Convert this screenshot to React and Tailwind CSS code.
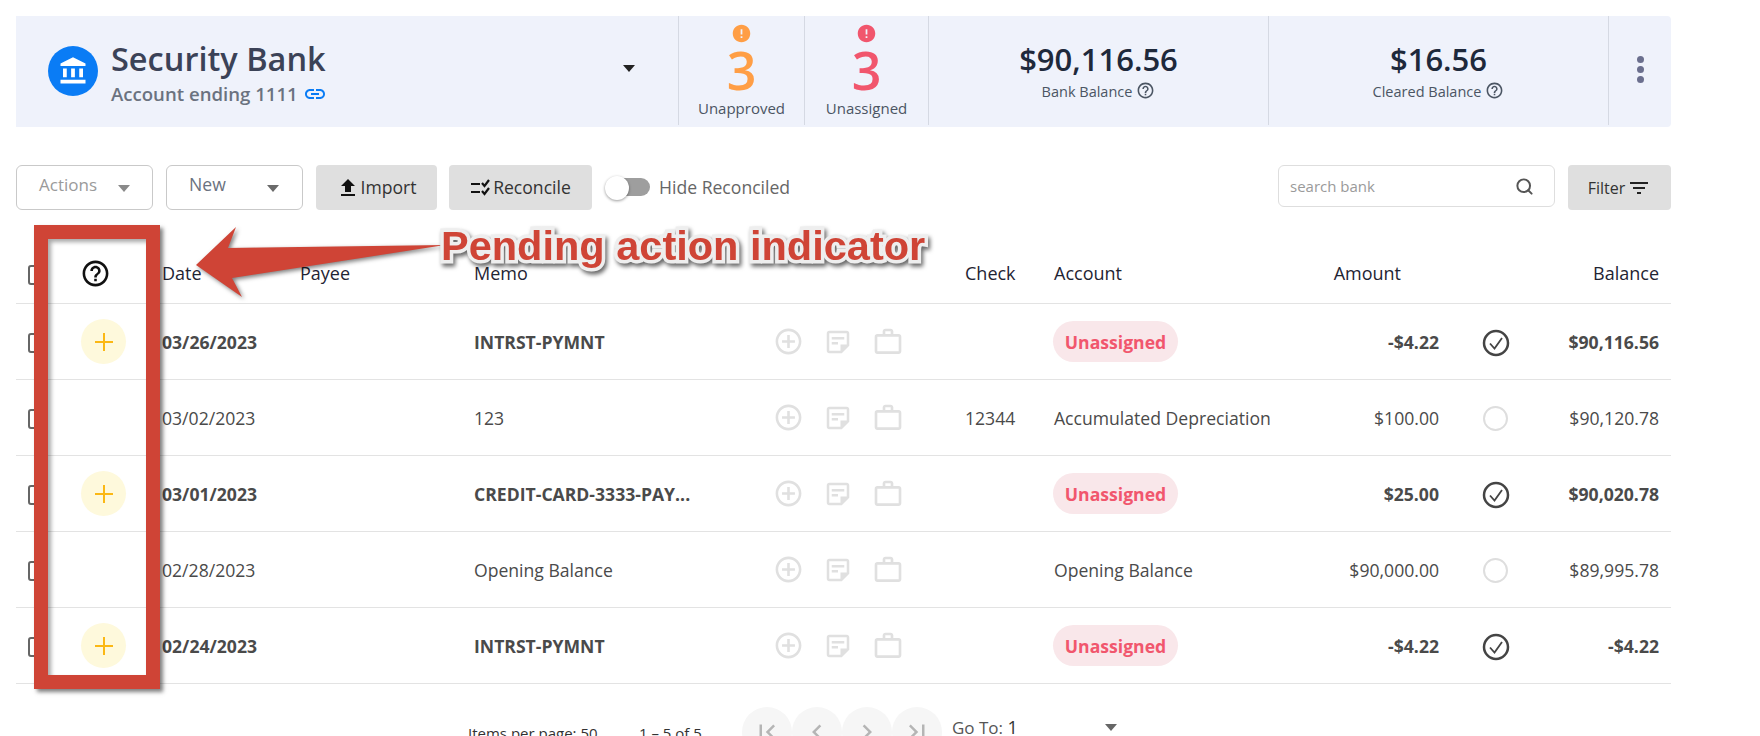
import React from 'react';
import { Search } from 'lucide-react';
import {
  MdAccountBalance, MdAddCircleOutline, MdChevronLeft, MdChevronRight, MdError, MdFileUpload,
  MdFilterList, MdFirstPage, MdHelpOutline, MdLastPage, MdLink, MdOutlineStickyNote2, MdWorkOutline,
} from 'react-icons/md';

const rows = [
  { date: '03/26/2023', memo: 'INTRST-PYMNT', check: '', account: null, amount: '-$4.22', balance: '$90,116.56', pending: true },
  { date: '03/02/2023', memo: '123', check: '12344', account: 'Accumulated Depreciation', amount: '$100.00', balance: '$90,120.78', pending: false },
  { date: '03/01/2023', memo: 'CREDIT-CARD-3333-PAY...', check: '', account: null, amount: '$25.00', balance: '$90,020.78', pending: true },
  { date: '02/28/2023', memo: 'Opening Balance', check: '', account: 'Opening Balance', amount: '$90,000.00', balance: '$89,995.78', pending: false },
  { date: '02/24/2023', memo: 'INTRST-PYMNT', check: '', account: null, amount: '-$4.22', balance: '-$4.22', pending: true },
];

const cols = 'grid grid-cols-[48px_98px_138px_174px_301px_190px_89px_246px_139px_113px_119px] items-center border-b border-[#e3e3e3]';

const Caret = ({ className }) => (
  <span className={`inline-block w-0 h-0 border-x-[6px] border-x-transparent border-t-[7px] ${className}`} />
);

const Stat = ({ icon, value, label, color, width }) => (
  <div className={`${width} h-[109px] border-l border-[#d5d9e3] flex flex-col items-center`}>
    <div className={`mt-[8px] h-[18px] flex items-center justify-center ${color}`}>{icon}</div>
    <div className={`text-[52px] leading-[50px] font-semibold mt-[3px] ${color}`}>{value}</div>
    <div className="text-[15px] leading-[20px] text-[#4b5563] mt-[3px]">{label}</div>
  </div>
);

const Balance = ({ value, label, width }) => (
  <div className={`${width} h-[109px] border-l border-[#d5d9e3] flex flex-col items-center`}>
    <div className="text-[31px] leading-[38px] font-semibold text-[#1e293b] mt-[24px]">{value}</div>
    <div className="flex items-center gap-1 text-[14.5px] leading-[20px] text-[#4b5563] mt-[4px]">
      {label}
      <MdHelpOutline size={19} className="-mt-1" />
    </div>
  </div>
);

const ReconcileIcon = () => (
  <svg width="22" height="18" viewBox="0 0 22 18" fill="none" stroke="#111" strokeWidth="2.2" className="mr-[1px]">
    <path d="M1 5h9M1 13h9M12 4l2.5 3L19 1M12 12l2.5 3L19 9" />
  </svg>
);

const ClearedIcon = () => (
  <svg width="28" height="28" viewBox="0 0 28 28" fill="none" stroke="#444">
    <circle cx="14" cy="14" r="12" strokeWidth="2.5" />
    <path d="M8 14.5l4.5 5L20 9" strokeWidth="1.8" />
  </svg>
);

const App = () => {
  return (
    <div className="relative h-[736px] w-[1760px] overflow-hidden bg-white font-['Open_Sans',sans-serif] text-[#4a4a4a]">
      <div className="pl-4 pt-4 w-[1671px]">
        {/* account summary */}
        <div className="flex h-[111px] bg-[#eff2fb] rounded-r">
          <div className="relative w-[662px] flex pl-8 pt-[30px] gap-[13px]">
            <div className="w-[50px] h-[50px] rounded-full bg-[#0a7cf5] flex items-center justify-center text-white">
              <MdAccountBalance size={30} />
            </div>
            <div className="-mt-[7px]">
              <div className="text-[32.5px] leading-[40px] font-semibold text-[#3b4257]">Security Bank</div>
              <div className="flex items-center gap-[5px] text-[18.6px] leading-[28px] font-semibold text-[#6b7280] mt-[1px]">
                Account ending 1111
                <MdLink size={24} className="text-[#0a7cf5]" />
              </div>
            </div>
            <Caret className="absolute left-[607px] top-[49px] border-t-[#222]" />
          </div>
          <Stat width="w-[126px]" color="text-[#ff9e45]" value="3" label="Unapproved" icon={<MdError size={21} />} />
          <Stat width="w-[124px]" color="text-[#f1566d]" value="3" label="Unassigned" icon={<MdError size={21} />} />
          <Balance width="w-[340px]" value="$90,116.56" label="Bank Balance" />
          <Balance width="w-[340px]" value="$16.56" label="Cleared Balance" />
          <div className="w-[63px] h-[109px] border-l border-[#d5d9e3] flex flex-col items-center gap-[3px] pt-[40px]">
            <span className="w-[7px] h-[7px] rounded-full bg-[#6b6f8e]" />
            <span className="w-[7px] h-[7px] rounded-full bg-[#6b6f8e]" />
            <span className="w-[7px] h-[7px] rounded-full bg-[#6b6f8e]" />
          </div>
        </div>

        {/* toolbar */}
        <div className="flex items-start mt-[38px] h-[45px] text-[17.6px]">
          <div className="w-[137px] h-[45px] border border-[#c9c9c9] rounded-md flex items-center justify-between pl-[22px] pr-[22px] text-[#9a9a9a]">
            <span className="-mt-[6px] text-[17px]">Actions</span>
            <Caret className="border-t-[#8a8a8a] mt-[2px]" />
          </div>
          <div className="w-[137px] h-[45px] ml-[13px] border border-[#c9c9c9] rounded-md flex items-center justify-between pl-[22px] pr-[23px] text-[#6b7280]">
            <span className="-mt-[6px]">New</span>
            <Caret className="border-t-[#6a6a6a] mt-[2px]" />
          </div>
          <button className="w-[121px] h-[45px] ml-[13px] bg-[#dfdfdf] rounded flex items-center justify-center text-[#333]">
            <MdFileUpload size={24} className="text-[#111]" />
            Import
          </button>
          <button className="w-[143px] h-[45px] ml-[12px] bg-[#dfdfdf] rounded flex items-center justify-center text-[#333]">
            <ReconcileIcon />
            Reconcile
          </button>
          <div className="relative w-[45px] h-[45px] ml-[13px]">
            <span className="absolute left-[2px] top-[13px] w-[43px] h-[18px] rounded-full bg-[#9e9e9e]" />
            <span className="absolute left-0 top-[11px] w-[24px] h-[24px] rounded-full bg-white shadow-[0_1px_3px_rgba(0,0,0,0.4)]" />
          </div>
          <span className="ml-[9px] leading-[45px] text-[#666]">Hide Reconciled</span>
          <div className="ml-auto w-[277px] h-[42px] border border-[#dedede] rounded-md flex items-center justify-between pl-[11px] pr-[20px]">
            <span className="text-[15px] text-[#9a9a9a]">search bank</span>
            <Search size={19} strokeWidth={2.5} className="text-[#555]" />
          </div>
          <button className="w-[103px] h-[45px] ml-[13px] bg-[#dfdfdf] rounded flex items-center justify-center gap-[2px] text-base text-[#333]">
            Filter
            <MdFilterList size={24} className="text-[#222]" />
          </button>
        </div>

        {/* transactions */}
        <div className={`${cols} h-[61px] mt-[33px] text-[18px] font-medium text-[#1f2433]`}>
          <div className="pl-3"><span className="block w-5 h-5 mt-[3px] border-2 border-[#666] rounded-[3px]" /></div>
          <div className="pl-[16px]"><MdHelpOutline size={31} className="text-[#111]" /></div>
          <div>Date</div>
          <div>Payee</div>
          <div>Memo</div>
          <div />
          <div>Check</div>
          <div>Account</div>
          <div className="text-right pr-[38px]">Amount</div>
          <div />
          <div className="text-right pr-[12px]">Balance</div>
        </div>
        {rows.map((row) => (
          <div key={row.date} className={`${cols} h-[76px] text-[17.6px] ${row.pending ? 'font-bold' : ''}`}>
            <div className="pl-3"><span className="block w-5 h-5 mt-[3px] border-2 border-[#666] rounded-[3px]" /></div>
            <div className="pl-[17px]">
              {row.pending && (
                <span className="w-[45px] h-[45px] rounded-full bg-[#fef9dc] flex items-center justify-center">
                  <svg width="18" height="18" viewBox="0 0 18 18" stroke="#fbb815" strokeWidth="2"><path d="M9 0v18M0 9h18" /></svg>
                </span>
              )}
            </div>
            <div className="pt-[2px]">{row.date}</div>
            <div />
            <div className="pt-[2px] whitespace-nowrap">{row.memo}</div>
            <div className="flex items-center gap-[19px] -ml-[2px] text-[#e0e0e0]">
              <MdAddCircleOutline size={31} />
              <MdOutlineStickyNote2 size={30} />
              <MdWorkOutline size={32} />
            </div>
            <div className="pt-[2px] font-normal">{row.check}</div>
            {row.account ? <div className="pt-[2px]">{row.account}</div> : (
              <div>
                <span className="-ml-[1px] inline-flex items-center justify-center w-[125px] h-[41px] pt-[2px] rounded-full bg-[#f9e7ea] text-[#f1566d] font-bold">Unassigned</span>
              </div>
            )}
            <div className="pt-[2px] text-right">{row.amount}</div>
            <div className="flex justify-center pt-[2px]">
              {row.pending ? <ClearedIcon /> : <span className="w-[25px] h-[25px] rounded-full border-2 border-[#dedede]" />}
            </div>
            <div className="pt-[2px] text-right pr-[12px]">{row.balance}</div>
          </div>
        ))}

        {/* pagination, cut off by the bottom of the window */}
        <div className="relative flex h-[52px] overflow-hidden text-[15px] text-[#333]">
          <span className="absolute left-[452px] top-[38px]">Items per page: 50</span>
          <span className="absolute left-[623px] top-[38px]">1 – 5 of 5</span>
          <div className="absolute left-[726px] top-[23px] flex text-[#b5b5b5]">
            {[MdFirstPage, MdChevronLeft, MdChevronRight, MdLastPage].map((Icon, i) => (
              <span key={i} className="w-[50px] h-[50px] rounded-full bg-[#f6f6f6] flex items-center justify-center"><Icon size={30} /></span>
            ))}
          </div>
          <span className="absolute left-[936px] top-[30px] text-[17px] text-[#555]">Go To: <span className="text-[18px] text-[#333]">1</span></span>
          <Caret className="absolute left-[1089px] top-[40px] border-t-[#666]" />
        </div>
      </div>

      {/* annotation drawn over the table */}
      <div className="absolute left-[34px] top-[225px] w-[126px] h-[464px] border-[14px] border-[#cf4436] [box-shadow:3px_3px_4px_rgba(0,0,0,0.5),inset_3px_3px_4px_rgba(0,0,0,0.35)]" />
      <svg className="absolute left-0 top-0 drop-shadow-[2px_2px_2px_rgba(0,0,0,0.5)]" width="500" height="320" viewBox="0 0 500 320">
        <polygon fill="#cf4436" points="196,265 236,227 228,248 445,245 232,278 242,297" />
      </svg>
      <div className="absolute left-[441px] top-[221px] font-['Liberation_Sans',sans-serif] font-bold text-[41.5px] leading-[50px] text-[#cf4436] whitespace-nowrap [-webkit-text-stroke:7px_#eeeeee] [paint-order:stroke_fill] drop-shadow-[2px_3px_2px_rgba(0,0,0,0.6)]">
        Pending action indicator
      </div>
    </div>
  );
};

export default App;
